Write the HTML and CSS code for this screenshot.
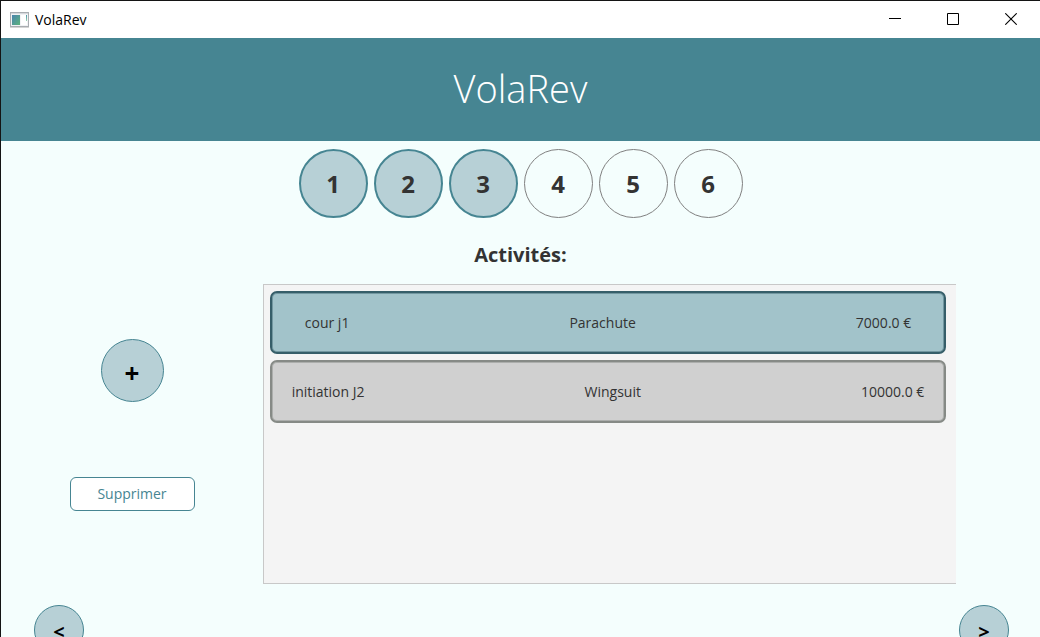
FILE: index.html
```html
<!DOCTYPE html>
<html lang="fr">
<head>
<meta charset="utf-8">
<title>VolaRev</title>
<link rel="stylesheet" href="styles.css">
</head>
<body>
<div class="window">
  <div class="titlebar">
    <svg class="app-icon" width="20" height="16" viewBox="0 0 20 16" aria-hidden="true">
      <defs>
        <linearGradient id="pane" x1="0" y1="0" x2="1" y2="1">
          <stop offset="0" stop-color="#4a84ae"/>
          <stop offset="1" stop-color="#5cb37c"/>
        </linearGradient>
        <linearGradient id="strip" x1="0" y1="0" x2="0" y2="1">
          <stop offset="0" stop-color="#4a94a8"/>
          <stop offset="1" stop-color="#9ad4b0"/>
        </linearGradient>
      </defs>
      <rect x="0.5" y="0.5" width="18" height="14" fill="#f1f2f4" stroke="#a9adb1"/>
      <path d="M0 15.5h19" stroke="#d4d4d4"/>
      <path d="M1 1.5h17" stroke="#d5d8dc"/>
      <rect x="2" y="3" width="8" height="10" fill="url(#pane)"/>
      <rect x="11" y="3" width="6" height="10" fill="#fff"/>
      <rect x="16" y="3" width="1" height="6" fill="url(#strip)"/>
    </svg>
    <span class="app-name">VolaRev</span>
    <div class="controls">
      <button class="control" aria-label="Réduire"><svg width="12" height="12" viewBox="0 0 12 12"><path d="M0 5.5h12" stroke="#000"/></svg></button>
      <button class="control" aria-label="Agrandir"><svg width="12" height="12" viewBox="0 0 12 12"><path d="M.5 .5h11v11h-11z" fill="none" stroke="#000"/></svg></button>
      <button class="control" aria-label="Fermer"><svg width="12" height="12" viewBox="0 0 12 12"><path d="M.3 .3l11.4 11.4M11.7 .3L.3 11.7" stroke="#000" stroke-width="1.1"/></svg></button>
    </div>
  </div>
  <header class="banner"><h1 class="banner-title">VolaRev</h1></header>
  <main class="content">
    <nav class="steps" aria-label="Étapes">
      <button class="step done">1</button>
      <button class="step done">2</button>
      <button class="step done">3</button>
      <button class="step">4</button>
      <button class="step">5</button>
      <button class="step">6</button>
    </nav>
    <h2 class="section-title">Activités:</h2>
    <div class="workspace">
      <div class="actions">
        <button class="round add" aria-label="Ajouter">+</button>
        <button class="delete">Supprimer</button>
      </div>
      <ul class="activities">
        <li class="activity selected"><span>cour j1</span><span>Parachute</span><span>7000.0 €</span></li>
        <li class="activity"><span>initiation J2</span><span>Wingsuit</span><span>10000.0 €</span></li>
      </ul>
    </div>
    <div class="pager">
      <button class="round" aria-label="Précédent">&lt;</button>
      <button class="round" aria-label="Suivant">&gt;</button>
    </div>
  </main>
</div>
</body>
</html>
```
FILE: styles.css
```css
* {
  box-sizing: border-box;
}

body {
  margin: 0;
  font-family: "Open Sans", "Noto Sans", sans-serif;
  font-size: 14px;
  line-height: 20px;
  color: #333;
}

button {
  padding: 0;
  font: inherit;
  color: inherit;
}

.window {
  height: 100vh;
  overflow: hidden;
  border-top: 1px solid #141414;
  border-left: 1px solid #141414;
  background: #f4fefd;
}

.titlebar {
  display: flex;
  align-items: center;
  height: 37px;
  padding-left: 9px;
  background: #fff;
}

.app-name {
  margin-left: 5px;
  color: #000;
}

.controls {
  display: flex;
  align-self: stretch;
  margin-left: auto;
  padding-bottom: 1px;
}

.control {
  display: grid;
  place-items: center;
  width: 58px;
  border: 0;
  background: none;
}

.banner {
  display: grid;
  place-items: center;
  height: 103px;
  padding-bottom: 4px;
  background: #468592;
}

.banner-title {
  margin: 0;
  font-size: 38px;
  line-height: 52px;
  font-weight: 300;
  color: #fff;
}

.steps {
  display: flex;
  justify-content: center;
  gap: 6px;
  padding-top: 8px;
}

.step {
  width: 69px;
  height: 69px;
  border: 1px solid #808080;
  border-radius: 50%;
  background: none;
  font-size: 24px;
  font-weight: 700;
}

.step.done {
  border: 2px solid #468592;
  background: #b7d0d6;
}

.section-title {
  margin: 22px 0 14px;
  font-size: 20px;
  line-height: 30px;
  font-weight: 700;
  text-align: center;
}

.workspace {
  display: flex;
  padding-right: 84px;
}

.actions {
  display: flex;
  flex-direction: column;
  align-items: center;
  gap: 75px;
  width: 262px;
  padding-top: 55px;
}

.round {
  width: 50px;
  height: 50px;
  border: 1px solid #468592;
  border-radius: 50%;
  background: #b7d0d6;
  font-size: 20px;
  font-weight: 700;
  color: #000;
}

.round.add {
  width: 63px;
  height: 63px;
  padding-top: 4px;
  font-size: 26px;
}

.delete {
  width: 125px;
  height: 34px;
  border: 1px solid #468592;
  border-radius: 6px;
  background: #fff;
  color: #468592;
}

.activities {
  display: flex;
  flex: 1;
  flex-direction: column;
  gap: 6px;
  min-height: 300px;
  margin: 0;
  padding: 6px 10px 6px 6px;
  border: 1px solid #c8c8c8;
  border-right: 0;
  background: #f4f4f4;
  list-style: none;
}

.activity {
  display: flex;
  align-items: center;
  justify-content: center;
  gap: 220px;
  height: 63px;
  border: 2px solid #868a86;
  border-radius: 7px;
  background: #d0d0d0;
  box-shadow: inset 0 0 0 1px #acaeac;
  white-space: nowrap;
}

.activity.selected {
  border-color: #365e69;
  background: #a2c3ca;
  box-shadow: inset 0 0 0 1px #7297a0;
}

.pager {
  display: flex;
  justify-content: space-between;
  padding: 21px 31px 0 33px;
}

.pager .round {
  padding-top: 4px;
}
```
